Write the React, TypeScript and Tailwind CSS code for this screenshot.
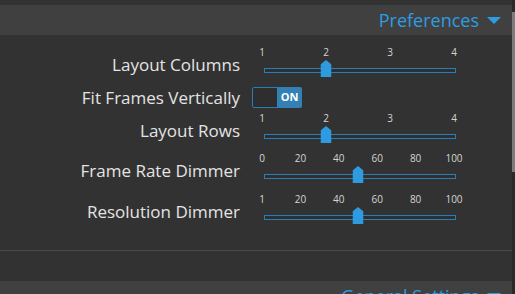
import React from "react"

type SliderProps = { ticks: number[]; min: number; max: number; value: number }

function Slider({ ticks, min, max, value }: SliderProps) {
  const pct = (v: number) => ((v - min) / (max - min)) * 100
  return (
    <div className="w-[192px]">
      <div className="relative h-[15px]">
        {ticks.map((t, i) => (
          <span
            key={i}
            className="absolute top-0 -translate-x-1/2 text-[10px] leading-[15px] text-[#d4d4d4]"
            style={{ left: `calc(${i === 0 ? 0 : pct(t)}% - 2px)` }}
          >
            {t}
          </span>
        ))}
      </div>
      <div className="relative h-[18px] pt-[8px]">
        <div className="h-[5px] p-px bg-[#2b7db5]">
          <div className="h-full bg-[#2f2f2f]" />
        </div>
        <svg
          className="absolute top-0 -translate-x-1/2"
          style={{ left: `calc(${pct(value)}% - 2px)` }}
          width="11"
          height="17"
          viewBox="0 0 11 17"
        >
          <polygon points="5.5,0 11,4.5 11,17 0,17 0,4.5" fill="#2e9be0" />
        </svg>
      </div>
    </div>
  )
}

function Label({ children, slider }: { children: React.ReactNode; slider?: boolean }) {
  return (
    <div
      className={`w-[240px] shrink-0 text-right text-[17px] leading-[20px] text-[#e4e4e4] ${slider ? "mt-[10px]" : ""}`}
    >
      {children}
    </div>
  )
}

function Header({ title }: { title: string }) {
  return (
    <div className="h-[30px] shrink-0 bg-[#404040] flex items-center justify-end pr-[11px]">
      <span className="text-[18px] leading-[24px] text-[#2f9be0]">{title}</span>
      <svg className="ml-[8px]" width="14" height="7" viewBox="0 0 14 7">
        <polygon points="0,0 14,0 7,7" fill="#2f9be0" />
      </svg>
    </div>
  )
}

export default function App() {
  return (
    <div
      className="w-[515px] h-[294px] overflow-hidden flex bg-[#323232]"
      style={{ fontFamily: '"Open Sans", "Noto Sans", sans-serif' }}
    >
      <div className="w-[512px] flex flex-col">
        <div className="h-[5px] shrink-0" />
        <Header title="Preferences" />

        {/* Layout Columns */}
        <div className="flex shrink-0 mt-[10px]">
          <Label slider>Layout Columns</Label>
          <div className="ml-[24px]">
            <Slider ticks={[1, 2, 3, 4]} min={1} max={4} value={2} />
          </div>
        </div>

        {/* Fit Frames Vertically */}
        <div className="flex shrink-0 items-center mt-[9px] h-[21px]">
          <Label>Fit Frames Vertically</Label>
          <div className="ml-[12px] flex h-[21px] w-[50px] rounded-[2px] overflow-hidden">
            <div className="w-[25px] border border-r-0 border-[#2b7db5] rounded-l-[2px] bg-[#2e2e2e]" />
            <div className="w-[25px] bg-[#3380b5] flex items-center justify-center text-[11px] font-bold text-white">
              ON
            </div>
          </div>
        </div>

        {/* Layout Rows */}
        <div className="flex shrink-0 mt-[3px]">
          <Label slider>Layout Rows</Label>
          <div className="ml-[24px]">
            <Slider ticks={[1, 2, 3, 4]} min={1} max={4} value={2} />
          </div>
        </div>

        {/* Frame Rate Dimmer */}
        <div className="flex shrink-0 mt-[7px]">
          <Label slider>Frame Rate Dimmer</Label>
          <div className="ml-[24px]">
            <Slider ticks={[0, 20, 40, 60, 80, 100]} min={0} max={100} value={50} />
          </div>
        </div>

        {/* Resolution Dimmer */}
        <div className="flex shrink-0 mt-[8px]">
          <Label slider>Resolution Dimmer</Label>
          <div className="ml-[24px]">
            <Slider ticks={[1, 20, 40, 60, 80, 100]} min={0} max={100} value={50} />
          </div>
        </div>

        <div className="mt-[25px] h-[31px] shrink-0 border-t border-[#4a4a4a]" />
        <Header title="General Settings" />
      </div>
      <div className="w-[3px] flex flex-col bg-[#2a2a2a]">
        <div className="h-[12px] shrink-0" />
        <div className="h-[160px] shrink-0 bg-[#7c7c7c]" />
      </div>
    </div>
  )
}
